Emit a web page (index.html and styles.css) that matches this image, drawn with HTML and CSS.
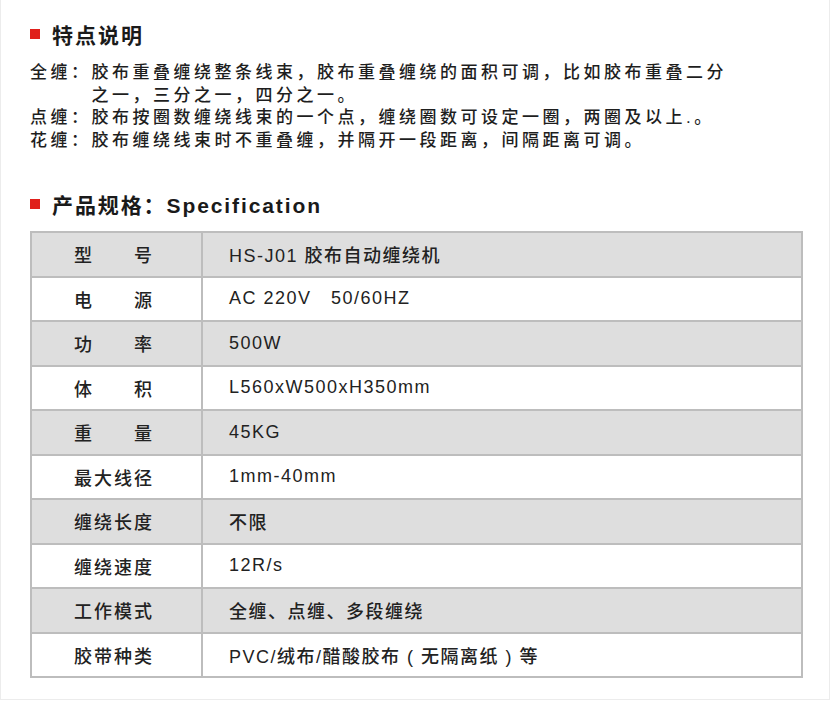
FILE: index.html
```html
<!DOCTYPE html>
<html lang="zh">
<head>
<meta charset="utf-8">
<link rel="stylesheet" href="styles.css">
</head>
<body>
<div class="page">
  <h2 class="heading"><span class="mark"></span><span>特点说明</span></h2>
  <div class="desc">
    <p class="item"><span class="term">全缠：</span><span class="text">胶布重叠缠绕整条线束，胶布重叠缠绕的面积可调，比如胶布重叠二分之一，三分之一，四分之一。</span></p>
    <p class="item"><span class="term">点缠：</span><span class="text">胶布按圈数缠绕线束的一个点，缠绕圈数可设定一圈，两圈及以上.。</span></p>
    <p class="item"><span class="term">花缠：</span><span class="text">胶布缠绕线束时不重叠缠，并隔开一段距离，间隔距离可调。</span></p>
  </div>
  <h2 class="heading heading-spec"><span class="mark"></span><span>产品规格：Specification</span></h2>
  <table class="spec">
    <tbody>
      <tr class="shade"><td class="label">型　　号</td><td class="value">HS-J01 胶布自动缠绕机</td></tr>
      <tr><td class="label">电　　源</td><td class="value">AC 220V&nbsp;&nbsp;&nbsp;50/60HZ</td></tr>
      <tr class="shade"><td class="label">功　　率</td><td class="value">500W</td></tr>
      <tr><td class="label">体　　积</td><td class="value">L560xW500xH350mm</td></tr>
      <tr class="shade"><td class="label">重　　量</td><td class="value">45KG</td></tr>
      <tr><td class="label">最大线径</td><td class="value">1mm-40mm</td></tr>
      <tr class="shade"><td class="label">缠绕长度</td><td class="value">不限</td></tr>
      <tr><td class="label">缠绕速度</td><td class="value">12R/s</td></tr>
      <tr class="shade"><td class="label">工作模式</td><td class="value">全缠、点缠、多段缠绕</td></tr>
      <tr><td class="label">胶带种类</td><td class="value">PVC/绒布/醋酸胶布 ( 无隔离纸 ) 等</td></tr>
    </tbody>
  </table>
</div>
</body>
</html>
```

FILE: styles.css
```css
html, body {
  margin: 0;
  padding: 0;
  background: #ffffff;
}

body {
  font-family: "Liberation Sans", "Noto Sans CJK SC", sans-serif;
  color: #222222;
}

.page {
  box-sizing: border-box;
  width: 830px;
  height: 700px;
  border: 1px solid #ececec;
  border-top: none;
  padding: 22px 0 0 29px;
}

.heading {
  display: flex;
  align-items: center;
  gap: 12px;
  height: 24px;
  margin: 0;
  font-size: 21px;
  font-weight: bold;
  letter-spacing: 2px;
  color: #1a1a1a;
}

.mark {
  width: 10px;
  height: 10px;
  background: #e0201b;
  flex: none;
}

.desc {
  margin-top: 16px;
  font-size: 17px;
  font-weight: 500;
  line-height: 22.5px;
  letter-spacing: 3.5px;
  color: #1e1e1e;
}

.item {
  display: flex;
  margin: 0;
  width: 700px;
}

.term {
  flex: none;
}

.text {
  flex: 1;
}

.heading-spec {
  margin-top: 40px;
  letter-spacing: 1.9px;
}

.spec {
  margin-top: 15px;
  width: 773px;
  border-collapse: collapse;
  font-size: 18px;
  font-weight: 500;
  color: #222222;
}

.spec td {
  border: 2px solid #bdbdbd;
  height: 42.5px;
  padding: 0;
  vertical-align: middle;
}

.spec tr.shade td {
  background: #dedede;
}

.label {
  width: 171px;
  padding-left: 42px !important;
  box-sizing: border-box;
  letter-spacing: 2px;
}

.value {
  padding-left: 26px !important;
  letter-spacing: 1.5px;
}
```
